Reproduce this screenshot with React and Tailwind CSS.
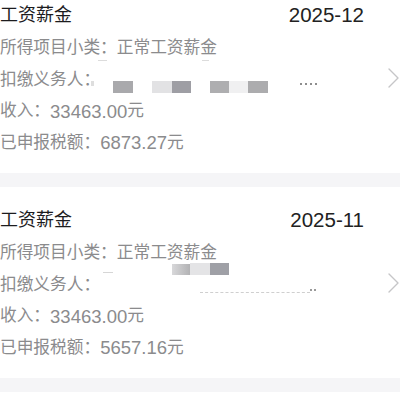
const records = [
  { month: "2025-12", income: "33463.00", tax: "6873.27", variant: 1 },
  { month: "2025-11", income: "33463.00", tax: "5657.16", variant: 2 },
];

function Chevron() {
  return (
    <svg width="11" height="20" viewBox="0 0 11 20" fill="none">
      <polyline points="1,1 10,10 1,19" stroke="#c6c6c8" strokeWidth="1.4" strokeLinejoin="round" strokeLinecap="round" />
    </svg>
  );
}

// blurred-out payer name, drawn over the rows
function RedactedOne() {
  return (
    <>
      <span className="absolute left-[98px] top-[63px] w-[9px] h-[1px] bg-[#dcdcdc]" />
      <span className="absolute left-[202px] top-[63px] w-[7px] h-[1px] bg-[#dcdcdc]" />
      <span className="absolute left-[91px] top-[84px] w-[3px] h-[5px] bg-[#dedede]" />
      <span className="absolute left-[113px] top-[84px] w-[20px] h-[12px] bg-[#a9a9ac]" />
      <span className="absolute left-[152px] top-[84px] w-[20px] h-[12px] bg-[#e2e2e4]" />
      <span className="absolute left-[172px] top-[84px] w-[19px] h-[12px] bg-[#9e9ea4]" />
      <span className="absolute left-[210px] top-[84px] w-[19px] h-[12px] bg-[#aeaeb0]" />
      <span className="absolute left-[229px] top-[84px] w-[19px] h-[12px] bg-[#f0f0f1]" />
      <span className="absolute left-[248px] top-[84px] w-[20px] h-[12px] bg-[#acacae]" />
      <span className="absolute left-[300px] top-[86px] flex gap-[3px]">
        <span className="w-[2px] h-[2px] bg-[#8e8e8e]" />
        <span className="w-[2px] h-[2px] bg-[#8e8e8e]" />
        <span className="w-[2px] h-[2px] bg-[#8e8e8e]" />
        <span className="w-[2px] h-[2px] bg-[#8e8e8e]" />
      </span>
    </>
  );
}

function RedactedTwo() {
  return (
    <>
      <span className="absolute left-[103px] top-[70px] w-[10px] h-[1px] bg-[#d6d6d6]" />
      <span className="absolute left-[172px] top-[62px] w-[18px] h-[11px] bg-gradient-to-r from-[#d8d8da] to-[#b2b2b4]" />
      <span className="absolute left-[190px] top-[61px] w-[20px] h-[12px] bg-[#e4e4e6]" />
      <span className="absolute left-[210px] top-[61px] w-[19px] h-[12px] bg-[#9fa0a6]" />
      <span className="absolute left-[200px] top-[90px] w-[110px] h-[1px] border-t border-dashed border-[#cfcfcf]" />
      <span className="absolute left-[310px] top-[87px] flex gap-[2px]">
        <span className="w-[2px] h-[2px] bg-[#9a9a9a]" />
        <span className="w-[2px] h-[2px] bg-[#9a9a9a]" />
      </span>
    </>
  );
}

function RecordCard({ month, income, tax, variant }) {
  return (
    <div className="flex items-center bg-white pt-[15px] pb-[14px]">
      <div className="relative flex-1 flex flex-col">
        <div className="h-[36px] flex items-center justify-between">
          <span className="text-[18px] leading-none text-[#1c1c1e]">工资薪金</span>
          <span className="text-[20.5px] leading-none text-[#222]">{month}</span>
        </div>
        <div className="h-[31.5px] flex items-center text-[16.7px] leading-none text-[#8b8b8d]">
          所得项目小类：正常工资薪金
        </div>
        <div className="h-[31.5px] flex items-center text-[16.7px] leading-none text-[#8b8b8d]">
          扣缴义务人：
        </div>
        <div className="h-[31.5px] flex items-center text-[16.7px] leading-none text-[#8b8b8d]">
          收入：<span className="text-[18.5px]">{income}</span>元
        </div>
        <div className="h-[31.5px] flex items-center text-[16.7px] leading-none text-[#8b8b8d]">
          已申报税额：<span className="text-[18.5px]">{tax}</span>元
        </div>
        {variant === 1 ? <RedactedOne /> : <RedactedTwo />}
      </div>
      <div className="w-[36px] flex justify-end pr-[1px]">
        <Chevron />
      </div>
    </div>
  );
}

export default function App() {
  return (
    <div className="w-[400px] h-[400px] overflow-hidden bg-white font-['Liberation_Sans','Noto_Sans_CJK_SC',sans-serif]">
      <div className="-mt-[18px]">
        {records.map((r) => (
          <div key={r.month}>
            <RecordCard {...r} />
            <div className="h-[14px] bg-[#f5f5f7]" />
          </div>
        ))}
      </div>
    </div>
  );
}
